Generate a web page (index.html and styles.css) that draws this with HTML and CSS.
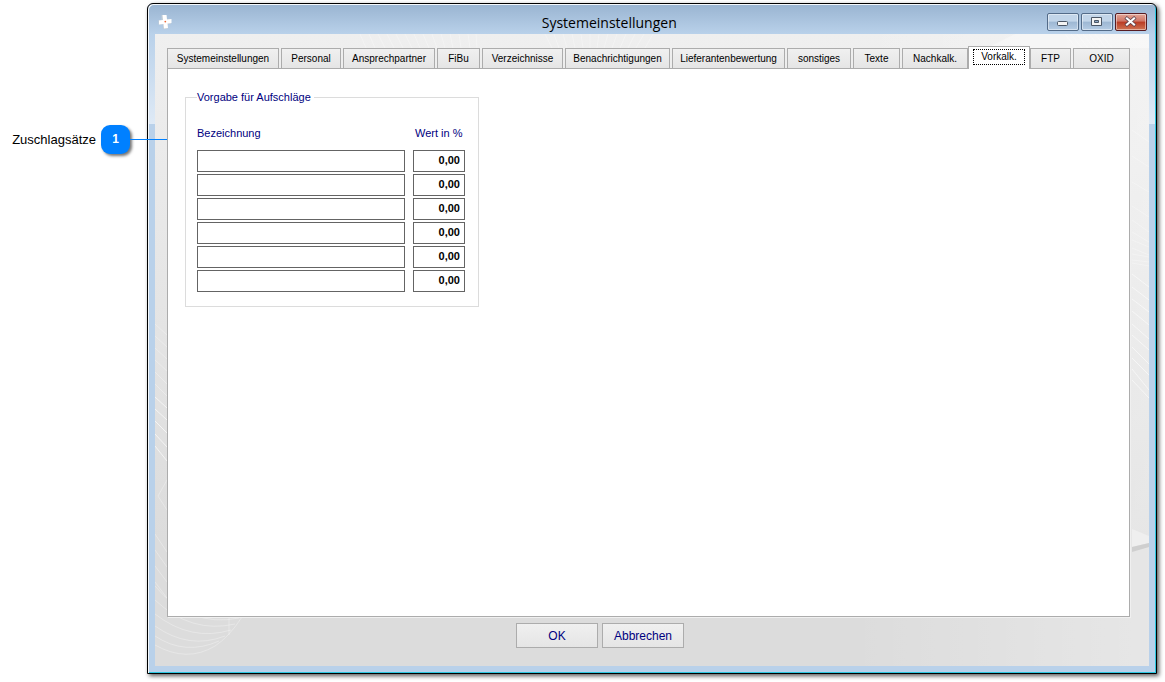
FILE: index.html
```html
<!DOCTYPE html>
<html lang="de">
<head>
<meta charset="utf-8">
<title>Systemeinstellungen</title>
<link rel="stylesheet" href="styles.css">
</head>
<body>
<div class="page">
  <aside class="callout">
    <span class="callout-text">Zuschlagsätze</span>
    <span class="callout-badge">1</span>
  </aside>
  <main class="window">
    <header class="titlebar">
      <svg class="app-icon" viewBox="0 0 16 16" aria-hidden="true">
        <path d="M4.500 1h5v4H14v5h-3.500v5H6v-4.500H1.500V6h3z" fill="#c3cdd6"/>
        <path d="M5.500 1h4l.5 4.500 4.500-.5v4l-4 .5.500 4.500-4 .5-.5-4.500-4.500.5V6.500L6 6z" fill="#fff"/>
        <circle cx="8.300" cy="7.600" r=".9" fill="#ee6a3a"/>
      </svg>
      <h1 class="title">Systemeinstellungen</h1>
      <div class="controls">
        <button class="control" type="button" aria-label="Minimieren">
          <svg viewBox="0 0 14 12"><rect x="1.500" y="5.500" width="10" height="4" rx="1" fill="#f4f4f4" stroke="#4b5665"/></svg>
        </button>
        <button class="control" type="button" aria-label="Maximieren">
          <svg viewBox="0 0 14 12"><path d="M1.500 1.500h10v8h-10z" fill="#f4f4f4" stroke="#4b5665"/><path d="M4.500 4.500h4v2h-4z" fill="#8fa9c6" stroke="#4b5665"/></svg>
        </button>
        <button class="control control-close" type="button" aria-label="Schließen">
          <svg viewBox="0 0 14 12"><path d="M3 2.500l7 6M10 2.500l-7 6" stroke="#59404a" stroke-width="3.600" stroke-linecap="square"/><path d="M3 2.500l7 6M10 2.500l-7 6" stroke="#fff" stroke-width="2.200" stroke-linecap="square"/></svg>
        </button>
      </div>
    </header>
    <div class="client">
      <svg class="pattern" viewBox="0 0 994 632" preserveAspectRatio="none" aria-hidden="true">
        <g fill="none" stroke="#fff" stroke-opacity=".3">
          <path d="M205 0l6 14M214 0l6 14M223 0l7 14M232 0l7 14M241 0l7 14M250 0l7 14M259 0l6 14M268 0l6 14M277 0l5 14M286 0l4 14M295 0l3 14M304 0l2 14M313 0l2 14M321 0l1 14"/>
          <path d="M390 0l7 14M399 0l5 14M408 0l4 14M417 0l3 14M426 0l2 14M435 0v14M444 0l-2 14M453 0l-4 14M462 0l-5 14M471 0l-6 14M480 0l-7 14M489 0l-8 14M498 0l-8 14"/>
          <path d="M910 0l11 14M916 0l11 14M922 0l11 14M928 0l11 14M934 0l11 14M940 0l11 14M946 0l11 14"/>
          <path d="M977 96l17 12M977 122l17 11M977 148l17 10M977 172l17 11M977 186l17 12M977 198l17 10M977 206l17 7M977 214l17 7M977 220l17 3M977 226l17 2M977 229l17 3"/>
          <path stroke-opacity=".55" d="M977 240l17 13M977 253l17 13M977 265l17 13M977 277l17 14M977 290l17 15M977 301l17 15M977 313l17 17M977 324l17 17M977 335l17 21M977 346l17 18"/>
          <path d="M0 290l12 11M0 302l12 11M0 314l12 11M0 326l12 11M0 338l12 12M0 350l12 12"/>
          <path stroke-opacity=".65" d="M0 363l12 11M0 375l12 11M0 387l12 12M0 400l12 13M0 412l12 15"/>
          <path d="M12 446l-9 16 9 14M0 500l12 18M0 516l12 17M0 532l12 16M0 548l12 16"/>
          <path d="M0 552q35 42 84 32M0 566q36 34 80 24M0 580q36 28 76 16M0 592q34 24 70 10M0 602q30 20 64 5M0 611q32 18 60 1 14-9 27-29M74 583v18"/>
        </g>
        <path d="M832 14L860 0h134v14z" fill="#fff" fill-opacity=".35"/>
        <path d="M977 495l17 7v7l-17 4z" fill="#efefef"/>
        <path d="M977 513l17-4v4l-17 5z" fill="#cfcfcf"/>
      </svg>
      <div class="tabs" role="tablist">
        <button class="tab" type="button" role="tab">Systemeinstellungen</button>
        <button class="tab" type="button" role="tab">Personal</button>
        <button class="tab" type="button" role="tab">Ansprechpartner</button>
        <button class="tab" type="button" role="tab">FiBu</button>
        <button class="tab" type="button" role="tab">Verzeichnisse</button>
        <button class="tab" type="button" role="tab">Benachrichtigungen</button>
        <button class="tab" type="button" role="tab">Lieferantenbewertung</button>
        <button class="tab" type="button" role="tab">sonstiges</button>
        <button class="tab" type="button" role="tab">Texte</button>
        <button class="tab" type="button" role="tab">Nachkalk.</button>
        <button class="tab tab-active" type="button" role="tab" aria-selected="true"><span class="tab-focus">Vorkalk.</span></button>
        <button class="tab" type="button" role="tab">FTP</button>
        <button class="tab" type="button" role="tab">OXID</button>
      </div>
      <section class="panel" role="tabpanel">
        <fieldset class="group">
          <legend class="group-title">Vorgabe für Aufschläge</legend>
          <table class="rates">
            <thead>
              <tr><th id="name">Bezeichnung</th><th id="value">Wert in %</th></tr>
            </thead>
            <tbody>
              <tr><td><input class="field" type="text" aria-labelledby="name"></td><td><input class="field field-number" type="text" value="0,00" aria-labelledby="value"></td></tr>
              <tr><td><input class="field" type="text" aria-labelledby="name"></td><td><input class="field field-number" type="text" value="0,00" aria-labelledby="value"></td></tr>
              <tr><td><input class="field" type="text" aria-labelledby="name"></td><td><input class="field field-number" type="text" value="0,00" aria-labelledby="value"></td></tr>
              <tr><td><input class="field" type="text" aria-labelledby="name"></td><td><input class="field field-number" type="text" value="0,00" aria-labelledby="value"></td></tr>
              <tr><td><input class="field" type="text" aria-labelledby="name"></td><td><input class="field field-number" type="text" value="0,00" aria-labelledby="value"></td></tr>
              <tr><td><input class="field" type="text" aria-labelledby="name"></td><td><input class="field field-number" type="text" value="0,00" aria-labelledby="value"></td></tr>
            </tbody>
          </table>
        </fieldset>
      </section>
      <footer class="actions">
        <button class="action" type="button">OK</button>
        <button class="action" type="button">Abbrechen</button>
      </footer>
    </div>
  </main>
</div>
</body>
</html>
```
FILE: styles.css
```css
* { box-sizing: border-box; }

body {
  margin: 0;
  background: #fff;
  color: #000;
  font-family: "Liberation Sans", Arial, sans-serif;
  font-size: 11px;
}

button, input { font: inherit; color: inherit; margin: 0; }

.page {
  display: flex;
  min-height: 100vh;
  padding: 3px 8px 8px 0;
}

/* Callout beside the window */
.callout {
  position: relative;
  z-index: 1;
  display: flex;
  flex: none;
  align-items: center;
  align-self: flex-start;
  justify-content: flex-end;
  gap: 5px;
  width: 147px;
  margin-top: 122px;
  padding-right: 17px;
}

.callout::after {
  content: "";
  position: absolute;
  top: 14px;
  right: -20px;
  width: 37px;
  height: 1px;
  background: #0080ff;
}

.callout-text { font-size: 13px; }

.callout-badge {
  width: 29px;
  height: 29px;
  border-radius: 9px;
  background: #0080ff;
  box-shadow: 2px 2px 3px rgba(0, 0, 0, .55);
  color: #fff;
  font-size: 12px;
  font-weight: bold;
  line-height: 29px;
  text-align: center;
}

/* Window frame */
.window {
  display: flex;
  flex: 1;
  flex-direction: column;
  min-width: 0;
  padding: 0 7px 7px;
  border: 1px solid #000;
  border-radius: 6px 6px 0 0;
  background:
    linear-gradient(#b9d1ea, #dfeaf6) 0 30px / 100% 90px no-repeat,
    linear-gradient(#99b4d1, #b9d1ea) 0 0 / 100% 30px no-repeat,
    #b9d1ea;
  box-shadow:
    inset 1px 1px 0 #f4f8fc,
    inset -1px -1px 0 #2bc8e2,
    2px 2px 4px rgba(0, 0, 0, .65);
}

.titlebar {
  display: grid;
  grid-template-columns: 45fr auto 55fr;
  height: 30px;
  padding: 0 2px;
}

.app-icon { width: 16px; height: 16px; margin-top: 10px; }

.title {
  margin: 0;
  font-family: "Open Sans", "Noto Sans", sans-serif;
  font-size: 14px;
  font-weight: normal;
  line-height: 38px;
}

.controls {
  display: flex;
  gap: 2px;
  justify-content: flex-end;
  padding-top: 9px;
}

.control {
  display: grid;
  place-items: center;
  width: 32px;
  height: 18px;
  padding: 0;
  border: 1px solid #536b88;
  border-radius: 2px;
  background: linear-gradient(#c2d5e9 45%, #9db7d3 50%, #b5cce4);
  box-shadow: inset 0 0 0 1px rgba(255, 255, 255, .45);
}

.control svg { width: 14px; height: 12px; }

.control-close {
  border-color: #571c22;
  background: linear-gradient(#e3a698, #cf7565 45%, #b93a23 50%, #cf7453);
}

/* Client area */
.client {
  position: relative;
  display: flex;
  flex: 1;
  flex-direction: column;
  padding: 12px 19px 18px 12px;
  background:
    linear-gradient(90deg, transparent 70%, rgba(255, 255, 255, .3)),
    linear-gradient(#efefef, #e8e8e8 30%, #dcdcdc 80%, #dcdcdc);
}

.pattern {
  position: absolute;
  inset: 0;
  width: 100%;
  height: 100%;
  pointer-events: none;
}

.tabs {
  position: relative;
  z-index: 1;
  display: grid;
  grid-template-columns:
    112fr 60fr 92fr 43fr 81fr 105fr 113fr
    64fr 47fr 66fr 58fr 41fr 57fr;
  gap: 2px;
  align-items: end;
  height: 23px;
  margin-bottom: -1px;
}

.tab {
  height: 21px;
  min-width: 0;
  padding: 0;
  border: 1px solid #acacac;
  background: linear-gradient(#f0f0f0, #e5e5e5);
  font-size: 10px;
  white-space: nowrap;
}

.tab-active {
  z-index: 1;
  height: 23px;
  margin: 0 -2px;
  padding: 0 4px 2px;
  border-bottom: 0;
  background: #fff;
}

.tab-focus {
  display: block;
  border: 1px dotted #000;
  line-height: 14px;
}

.panel {
  position: relative;
  flex: 1;
  padding: 22px 17px;
  border: 1px solid #acacac;
  background: #fff;
  box-shadow: 1px 1px 0 #f0f0f0;
}

.group {
  width: 294px;
  margin: 0;
  padding: 21px 13px 13px 11px;
  border: 1px solid #dcdcdc;
  color: #000080;
}

.group-title { padding: 0 3px 0 0; line-height: 13px; }

.rates {
  width: 100%;
  border-collapse: collapse;
  table-layout: fixed;
}

.rates th {
  height: 24px;
  padding: 0 0 0 2px;
  font-weight: normal;
  line-height: 16px;
  text-align: left;
  vertical-align: top;
}

.rates th:first-child { width: 216px; padding: 0; }

.rates td { height: 24px; padding: 0; }

.rates td:first-child { padding-right: 8px; }

.field {
  display: block;
  width: 100%;
  height: 22px;
  padding: 0 4px 2px;
  border: 1px solid #646464;
  border-radius: 0;
  background: #fff;
  color: #000;
}

.field-number { font-weight: bold; text-align: right; }

.actions {
  position: relative;
  display: flex;
  gap: 4px;
  justify-content: center;
  padding: 6px 0 0;
  margin-right: 97px;
}

.action {
  width: 82px;
  height: 25px;
  padding: 0;
  border: 1px solid #acacac;
  background: linear-gradient(#f0f0f0, #e5e5e5);
  color: #000080;
  font-size: 12px;
}
```
